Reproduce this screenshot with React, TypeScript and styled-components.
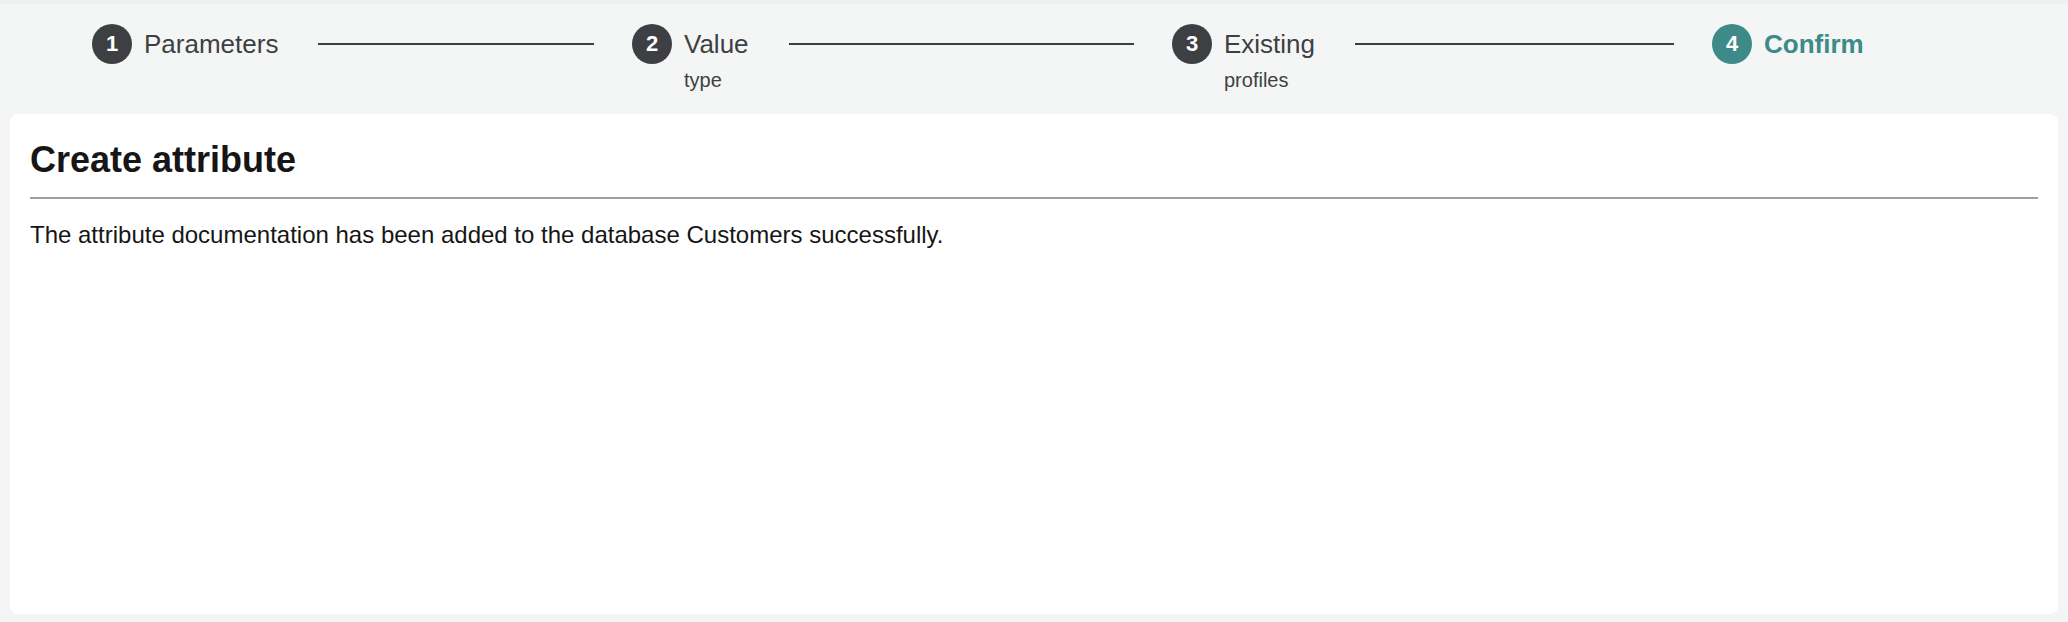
import React from "react";
import styled, { createGlobalStyle } from "styled-components";

const Global = createGlobalStyle`
  html, body {
    margin: 0;
    padding: 0;
    background: #f4f6f5;
  }
  body {
    font-family: "Liberation Sans", Arial, Helvetica, sans-serif;
    color: #161616;
  }
`;

const Page = styled.div`
  width: 2068px;
  height: 622px;
  box-sizing: border-box;
  background: #f4f6f5;
  border-top: 4px solid #eef0ef;
  display: flex;
  flex-direction: column;
  padding: 0 10px 8px;
`;

const Steps = styled.ol`
  list-style: none;
  margin: 0;
  padding: 20px 0 0 82px;
  height: 110px;
  box-sizing: border-box;
  display: grid;
  grid-template-columns: repeat(3, 540px) auto;
  align-items: start;
`;

const Step = styled.li`
  display: flex;
  align-items: flex-start;
`;

const Circle = styled.span<{ $active?: boolean }>`
  flex: none;
  width: 40px;
  height: 40px;
  border-radius: 50%;
  background: ${(p) => (p.$active ? "#3d8a88" : "#3e3f43")};
  color: #fff;
  font-weight: 700;
  font-size: 22px;
  display: flex;
  align-items: center;
  justify-content: center;
`;

const LabelBlock = styled.div`
  display: flex;
  flex-direction: column;
  margin-left: 12px;
`;

const Label = styled.span<{ $active?: boolean }>`
  font-size: 26px;
  line-height: 40px;
  color: ${(p) => (p.$active ? "#3d8a88" : "#3e3f43")};
  font-weight: ${(p) => (p.$active ? 700 : 400)};
  white-space: nowrap;
`;

const SubLabel = styled.span`
  font-size: 20px;
  line-height: 24px;
  margin-top: 4px;
  color: #3e3f43;
`;

const Connector = styled.span`
  flex: 1;
  height: 2px;
  background: #3e3f43;
  margin: 19px 38px 0 40px;
`;

const Card = styled.section`
  flex: 1;
  background: #fff;
  border-radius: 8px;
  padding: 20px 20px;
  display: flex;
  flex-direction: column;
`;

const Title = styled.h1`
  margin: 0;
  font-size: 36px;
  line-height: 52px;
  font-weight: 700;
  color: #161616;
`;

const Divider = styled.hr`
  margin: 11px 0 0;
  border: none;
  height: 2px;
  background: #a0a0a0;
`;

const Message = styled.p`
  margin: 22px 0 0;
  font-size: 24px;
  line-height: 28px;
  color: #161616;
`;

const steps = [
  { n: 1, label: "Parameters" },
  { n: 2, label: "Value", sub: "type" },
  { n: 3, label: "Existing", sub: "profiles" },
  { n: 4, label: "Confirm", active: true },
];

export default function App() {
  return (
    <>
      <Global />
      <Page>
        <Steps>
          {steps.map((s, i) => (
            <Step key={s.n}>
              <Circle $active={s.active}>{s.n}</Circle>
              <LabelBlock>
                <Label $active={s.active}>{s.label}</Label>
                {s.sub && <SubLabel>{s.sub}</SubLabel>}
              </LabelBlock>
              {i < steps.length - 1 && <Connector />}
            </Step>
          ))}
        </Steps>
        <Card>
          <Title>Create attribute</Title>
          <Divider />
          <Message>
            The attribute documentation has been added to the database Customers successfully.
          </Message>
        </Card>
      </Page>
    </>
  );
}
